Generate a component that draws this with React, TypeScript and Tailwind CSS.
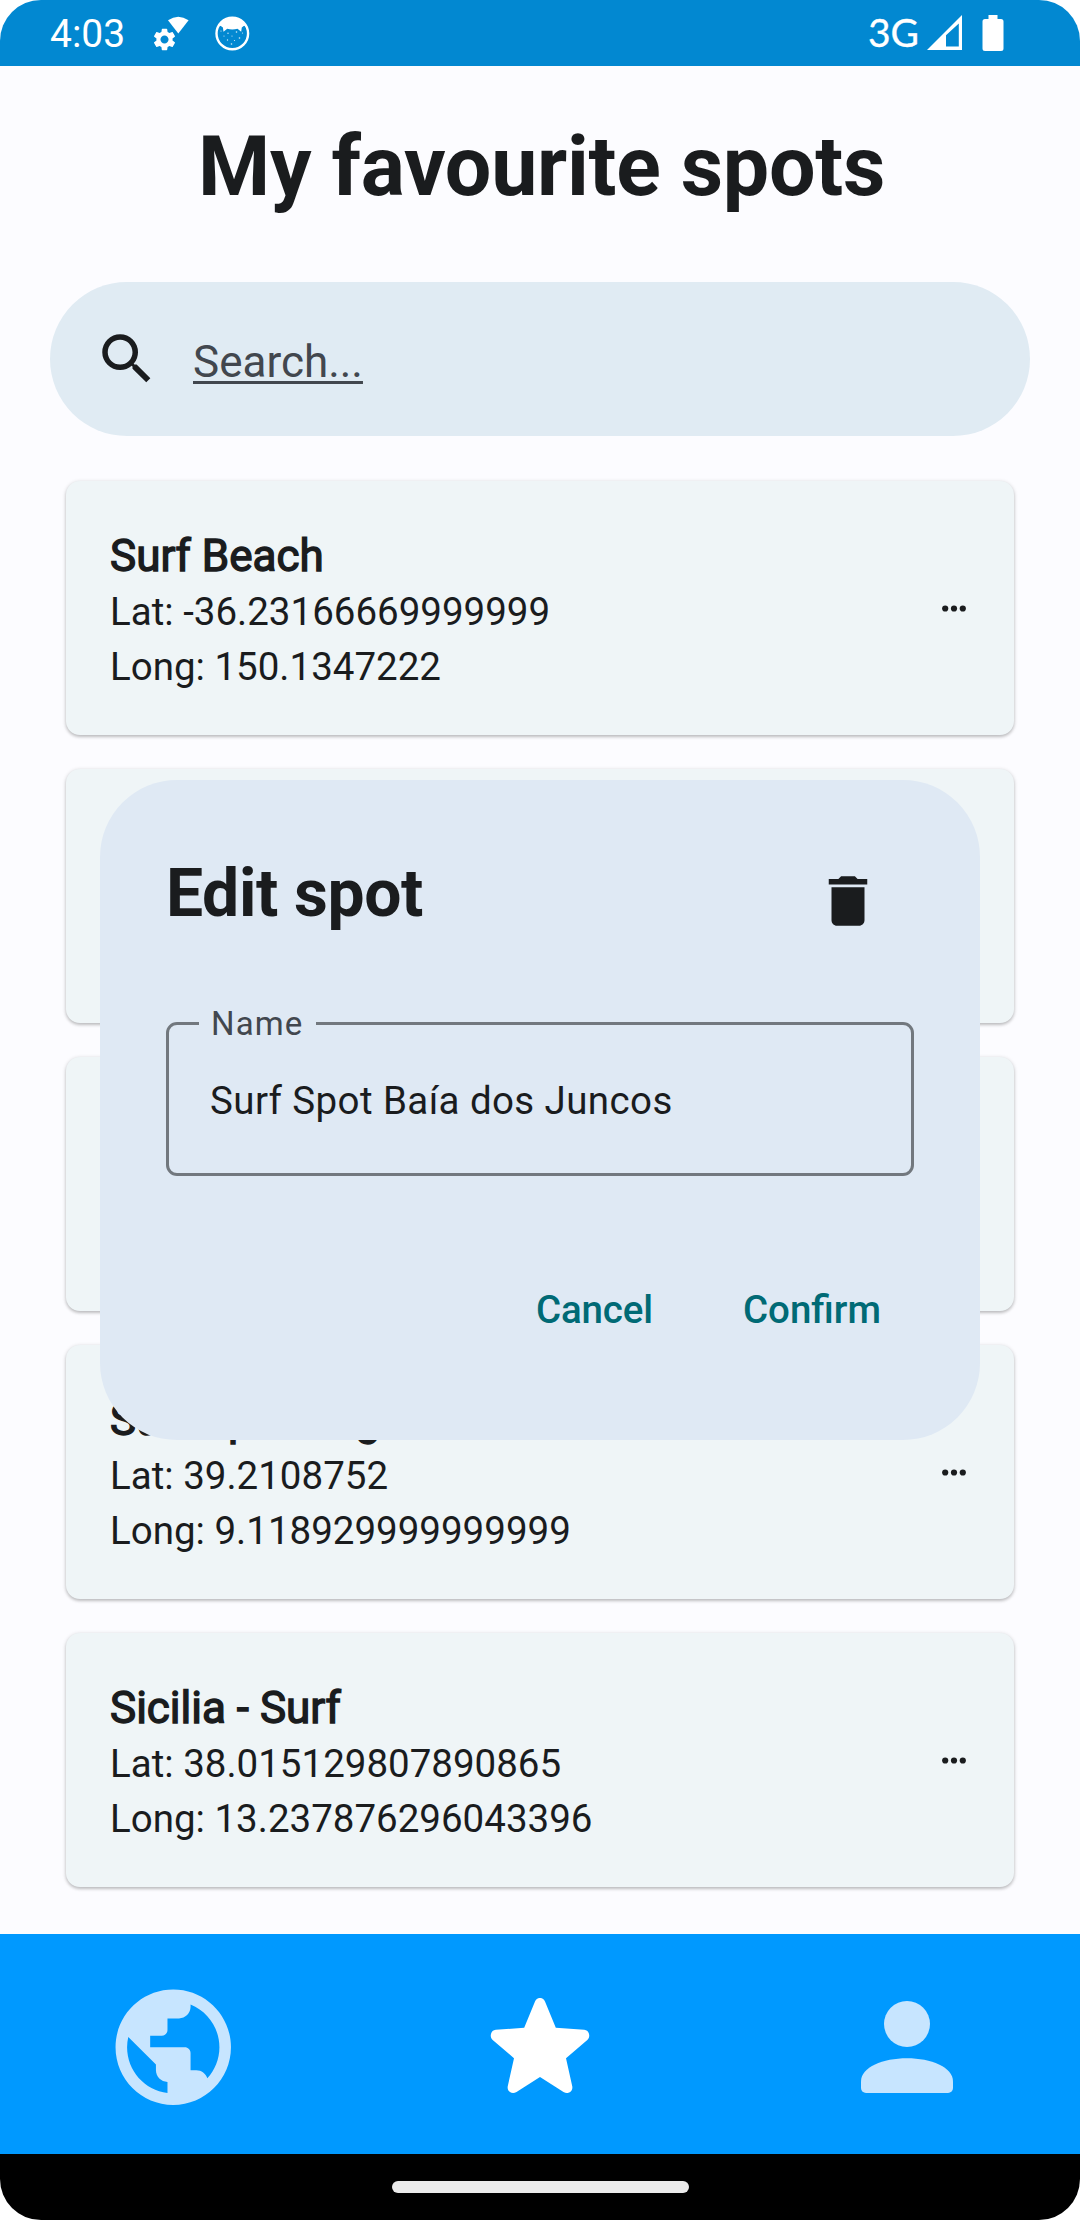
import { MdDelete, MdPublic, MdSearch, MdSettings } from "react-icons/md";

type Spot = { name?: string; lat?: string; long?: string };

const spots: Spot[] = [
  { name: "Surf Beach", lat: "-36.23166669999999", long: "150.1347222" },
  {},
  {},
  { name: "Surf Spot Cagliari", lat: "39.2108752", long: "9.118929999999999" },
  { name: "Sicilia - Surf", lat: "38.015129807890865", long: "13.237876296043396" },
];

function StatusBar() {
  return (
    <div className="flex h-[66px] shrink-0 items-start justify-between bg-[#0288d1] pr-[76px] pl-[50px] text-white">
      <div className="flex">
        <span className="w-[102px] pt-[7px] text-[39px] leading-[55px]">4:03</span>
        <div className="relative mt-[14px] h-[40px] w-[62px]">
          <MdSettings className="absolute top-[12px] -left-px size-[27px]" />
          <svg className="absolute top-0 left-[14px]" width="24" height="24" viewBox="0 0 24 24" fill="currentColor">
            <path d="M12.3 19.5 2 6.2Q12.3-.8 22.6 6.2Z" />
          </svg>
        </div>
        <svg className="mt-[16px]" width="36" height="36" viewBox="0 0 36 36">
          <circle cx="18.3" cy="17.5" r="15.8" fill="none" stroke="#fff" strokeWidth="2.4" />
          <path
            fill="#fff"
            d="M4.500 9.500Q10 1.500 18.300 1.500T32 9.500Q29.500 9.500 27.800 11.500L27.200 15.800 23.500 12.800Q18.300 14.200 13.200 12.800L9.500 15.800 8.900 11.500Q7 9.500 4.500 9.500Z"
          />
          <g fill="#fff" opacity=".85">
            <circle cx="7" cy="15" r=".6" />
            <circle cx="14" cy="17.3" r=".7" />
            <circle cx="22.5" cy="16" r=".8" />
            <circle cx="28.5" cy="17" r=".6" />
            <circle cx="10" cy="20" r=".6" />
            <circle cx="18" cy="20" r=".6" />
            <circle cx="25.5" cy="22" r=".8" />
            <circle cx="13.5" cy="24" r=".7" />
            <circle cx="20.5" cy="24.5" r=".6" />
            <circle cx="17.5" cy="28" r=".8" />
          </g>
        </svg>
      </div>
      <div className="flex">
        <span className="w-[59px] pt-[5px] font-['Lato'] text-[39px] leading-[54px] [-webkit-text-stroke:0.3px_white]">
          3G
        </span>
        <svg className="mt-[15px]" width="36" height="36" viewBox="0 0 36 36">
          <path fill="#fff" fillRule="evenodd" d="M0 35 35 0V35ZM19 20.200V31.500H31.800V8.500Z" />
        </svg>
        <svg className="mt-[15px] ml-[19px]" width="22" height="36" viewBox="0 0 22 36" fill="#fff">
          <path d="M6.500 0H15.500V4H19Q21.500 4 21.500 6.500V33.500Q21.500 36 19 36H3Q.5 36 .5 33.500V6.500Q.5 4 3 4H6.500Z" />
        </svg>
      </div>
    </div>
  );
}

function SpotCard({ name, lat, long }: Spot) {
  return (
    <div className="flex h-[254px] items-center rounded-[14px] bg-[#eff5f7] pr-[48px] pl-[44px] shadow-[0_1px_4px_rgba(0,0,0,0.18),0_2px_3px_rgba(0,0,0,0.14)]">
      {name && (
        <>
          <div className="flex-1 pt-[7px] text-[38.5px] leading-[55px]">
            <h2 className="text-[44px] leading-[55px] [-webkit-text-stroke:1.4px_#1a1c1e]">{name}</h2>
            <p>Lat: {lat}</p>
            <p>Long: {long}</p>
          </div>
          <svg width="24" height="8" viewBox="0 0 24 8" fill="#1a1c1e">
            <circle cx="3.2" cy="4.5" r="3.1" />
            <circle cx="12" cy="4.5" r="3.1" />
            <circle cx="20.8" cy="4.5" r="3.1" />
          </svg>
        </>
      )}
    </div>
  );
}

function EditDialog() {
  return (
    <div className="absolute top-[780px] left-[100px] flex h-[660px] w-[880px] flex-col rounded-[77px] bg-[#dfe9f4] px-[66px] pt-[70px]">
      <div className="flex h-[88px] items-center justify-between pr-[33px]">
        <h2 className="text-[66px] leading-[88px] font-bold tracking-[-0.39px]">Edit spot</h2>
        <MdDelete className="mt-[13px] size-[66px]" />
      </div>
      <div className="relative mt-[84px] flex h-[154px] items-center rounded-[11px] border-[3px] border-[#72787e] pt-[3px] pl-[41px]">
        <span className="absolute -top-[24px] left-[30px] w-[117px] bg-[#dfe9f4] pl-[12px] text-[33px] leading-[46px] tracking-[1.1px] text-[#42474e]">
          Name
        </span>
        <span className="text-[38.5px] leading-[55px] tracking-[0.4px]">Surf Spot Baía dos Juncos</span>
      </div>
      <div className="mt-[106px] flex justify-end gap-[90px] pr-[33px] text-[38.5px] leading-[55px] font-medium text-[#006a75]">
        <button className="tracking-[-0.15px]">Cancel</button>
        <button>Confirm</button>
      </div>
    </div>
  );
}

function NavBar() {
  return (
    <div className="grid h-[220px] grid-cols-[346px_388px_346px] place-items-center bg-[#0099ff] pt-[6px]">
      <MdPublic className="size-[138.5px] text-[#c7e5ff]" />
      <svg className="-mt-[3px]" width="100" height="96" viewBox="0 0 100 96" fill="#fff">
        <path d="M34.2 29.7 45 3.500C47-1.200 53-1.200 55 3.500L65.800 29.700 94.200 31.800C99.200 32.200 101 38.500 97.300 42L76 60.200 82.200 88C83.400 93.500 78 96.800 73.500 94L50 79 26.500 94C22 96.800 16.600 93.500 17.800 88L24 60.200 2.700 42C-1 38.500 .8 32.200 5.800 31.800Z" />
      </svg>
      <svg width="92" height="92" viewBox="0 0 92 92" fill="#c7e5ff">
        <circle cx="46" cy="23" r="23" />
        <path d="M0 80.500C0 66 22 57.300 46 57.300S92 66 92 80.500V87A5 5 0 0 1 87 92H5A5 5 0 0 1 0 87Z" />
      </svg>
    </div>
  );
}

export default function App() {
  return (
    <div className="relative flex h-[2220px] w-[1080px] flex-col overflow-hidden rounded-[41px] bg-[#fcfcff] font-['Roboto',sans-serif] text-[#1a1c1e]">
      <StatusBar />
      <div className="flex flex-1 flex-col">
        <h1 className="mt-[46px] pl-[3px] text-center text-[82.5px] leading-[110px] font-bold tracking-[-0.27px]">
          My favourite spots
        </h1>
        <div className="mx-[50px] mt-[60px] flex h-[154px] items-center rounded-full bg-[#e0ebf3] pl-[44px]">
          <MdSearch className="size-[66px]" />
          <span className="ml-[33px] pt-[5px] text-[44px] leading-[66px] text-[#42474e] underline decoration-[2.5px] underline-offset-[4px] [text-decoration-skip-ink:none]">
            Search...
          </span>
        </div>
        <div className="mx-[66px] mt-[45px] flex flex-col gap-[34px]">
          {spots.map((spot, i) => (
            <SpotCard key={i} {...spot} />
          ))}
        </div>
      </div>
      <NavBar />
      <div className="flex h-[66px] items-center justify-center bg-black">
        <div className="h-[12px] w-[297px] rounded-full bg-[#ebebeb]" />
      </div>
      <EditDialog />
    </div>
  );
}
